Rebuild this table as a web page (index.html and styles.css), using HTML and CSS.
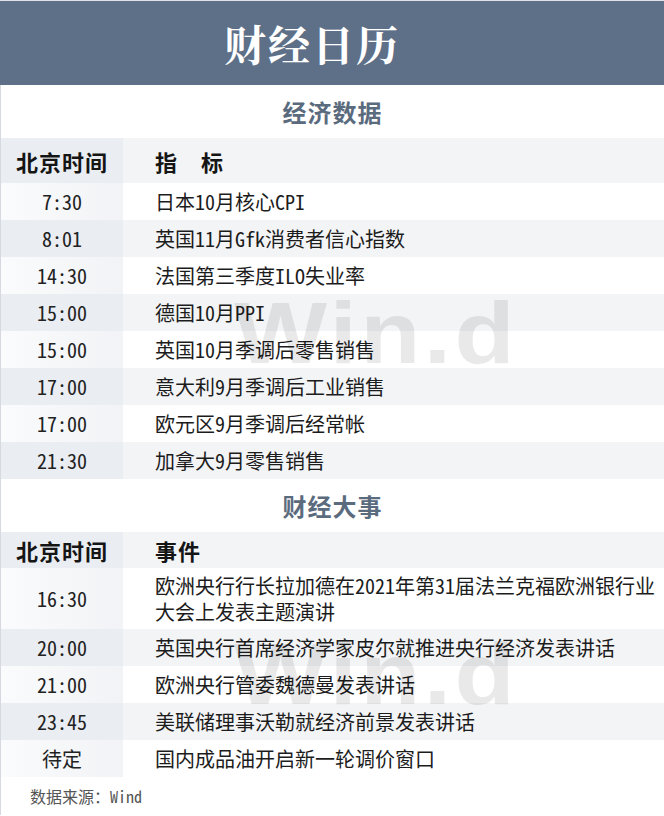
FILE: index.html
```html
<!DOCTYPE html>
<html lang="zh-CN">
<head>
<meta charset="utf-8">
<title>财经日历</title>
<link rel="stylesheet" href="styles.css">
</head>
<body>
<div class="page">
  <header class="banner"><h1>财经日历</h1></header>
  <main class="content">
    <section>
      <h2>经济数据</h2>
      <div class="table">
        <div class="row head tall"><div class="time">北京时间</div><div class="desc">指　标</div></div>
        <div class="row"><div class="time">7:30</div><div class="desc">日本10月核心CPI</div></div>
        <div class="row alt"><div class="time">8:01</div><div class="desc">英国11月Gfk消费者信心指数</div></div>
        <div class="row"><div class="time">14:30</div><div class="desc">法国第三季度ILO失业率</div></div>
        <div class="row alt"><div class="time">15:00</div><div class="desc">德国10月PPI</div></div>
        <div class="row"><div class="time">15:00</div><div class="desc">英国10月季调后零售销售</div></div>
        <div class="row alt"><div class="time">17:00</div><div class="desc">意大利9月季调后工业销售</div></div>
        <div class="row"><div class="time">17:00</div><div class="desc">欧元区9月季调后经常帐</div></div>
        <div class="row alt"><div class="time">21:30</div><div class="desc">加拿大9月零售销售</div></div>
      </div>
    </section>
    <section>
      <h2>财经大事</h2>
      <div class="table">
        <div class="row head short"><div class="time">北京时间</div><div class="desc">事件</div></div>
        <div class="row two"><div class="time">16:30</div><div class="desc">欧洲央行行长拉加德在2021年第31届法兰克福欧洲银行业<br>大会上发表主题演讲</div></div>
        <div class="row alt"><div class="time">20:00</div><div class="desc">英国央行首席经济学家皮尔就推进央行经济发表讲话</div></div>
        <div class="row"><div class="time">21:00</div><div class="desc">欧洲央行管委魏德曼发表讲话</div></div>
        <div class="row alt"><div class="time">23:45</div><div class="desc">美联储理事沃勒就经济前景发表讲话</div></div>
        <div class="row"><div class="time">待定</div><div class="desc">国内成品油开启新一轮调价窗口</div></div>
      </div>
    </section>
    <p class="source">数据来源：Wind</p>
    <div class="watermark wm1" aria-hidden="true">Win.d</div>
    <div class="watermark wm2" aria-hidden="true">Win.d</div>
  </main>
</div>
</body>
</html>
```
FILE: styles.css
```css
html, body {
  margin: 0;
  padding: 0;
  background: #ffffff;
}

body {
  font-family: "Noto Sans Mono CJK SC", "Noto Sans CJK SC", sans-serif;
  color: #1c1c1c;
}

.page {
  width: 664px;
  overflow: hidden;
}

.banner {
  height: 84px;
  border-top: 1px solid #dfe3e7;
  background: #5e7088;
  display: flex;
  align-items: center;
  justify-content: center;
  padding-right: 40px;
}

.banner h1 {
  margin: 0;
  font-family: "Noto Serif CJK SC", "Noto Sans CJK SC", serif;
  font-weight: 700;
  font-size: 42px;
  letter-spacing: 2px;
  color: #ffffff;
}

.content {
  position: relative;
  border-left: 1px solid #d6dae0;
}

h2 {
  margin: 0;
  height: 53px;
  display: flex;
  align-items: center;
  justify-content: center;
  font-family: "Noto Sans CJK SC", sans-serif;
  font-size: 24px;
  font-weight: 700;
  color: #5b6b7e;
  letter-spacing: 1px;
}

.row {
  display: flex;
  background: #ffffff;
}

.row.alt,
.row.head {
  background: #f3f4f6;
}

.time {
  width: 122px;
  flex: none;
  display: flex;
  align-items: center;
  justify-content: center;
  font-size: 20px;
  color: #222222;
  background: linear-gradient(to right, #fafbfc, #f1f3f6);
}

.row.alt .time,
.row.head .time {
  background: #eaedf1;
}

.desc {
  padding: 5.5px 0 5.5px 32px;
  line-height: 26px;
  font-size: 20px;
  color: #1c1c1c;
}

.row.head .time,
.row.head .desc {
  font-family: "Noto Sans CJK SC", sans-serif;
  font-size: 22px;
  font-weight: 700;
  color: #151515;
  letter-spacing: 1px;
}

.row.head .desc {
  display: flex;
  align-items: center;
  padding-top: 0;
  padding-bottom: 0;
}

.row.tall {
  height: 45px;
}

.row.short {
  height: 36px;
}

.row.two .desc {
  padding-top: 4.5px;
  padding-bottom: 4.5px;
}

.source {
  margin: 0;
  height: 38px;
  display: flex;
  align-items: center;
  padding-left: 29px;
  font-size: 16px;
  color: #555555;
}

.watermark {
  position: absolute;
  left: 233px;
  font-family: "Liberation Sans", Arial, sans-serif;
  font-weight: 700;
  font-size: 88px;
  line-height: 1;
  letter-spacing: 3px;
  transform: scaleX(1.12);
  transform-origin: left top;
  color: rgba(0, 0, 0, 0.085);
  pointer-events: none;
}

.wm1 {
  top: 204px;
}

.wm2 {
  top: 545px;
}
```
